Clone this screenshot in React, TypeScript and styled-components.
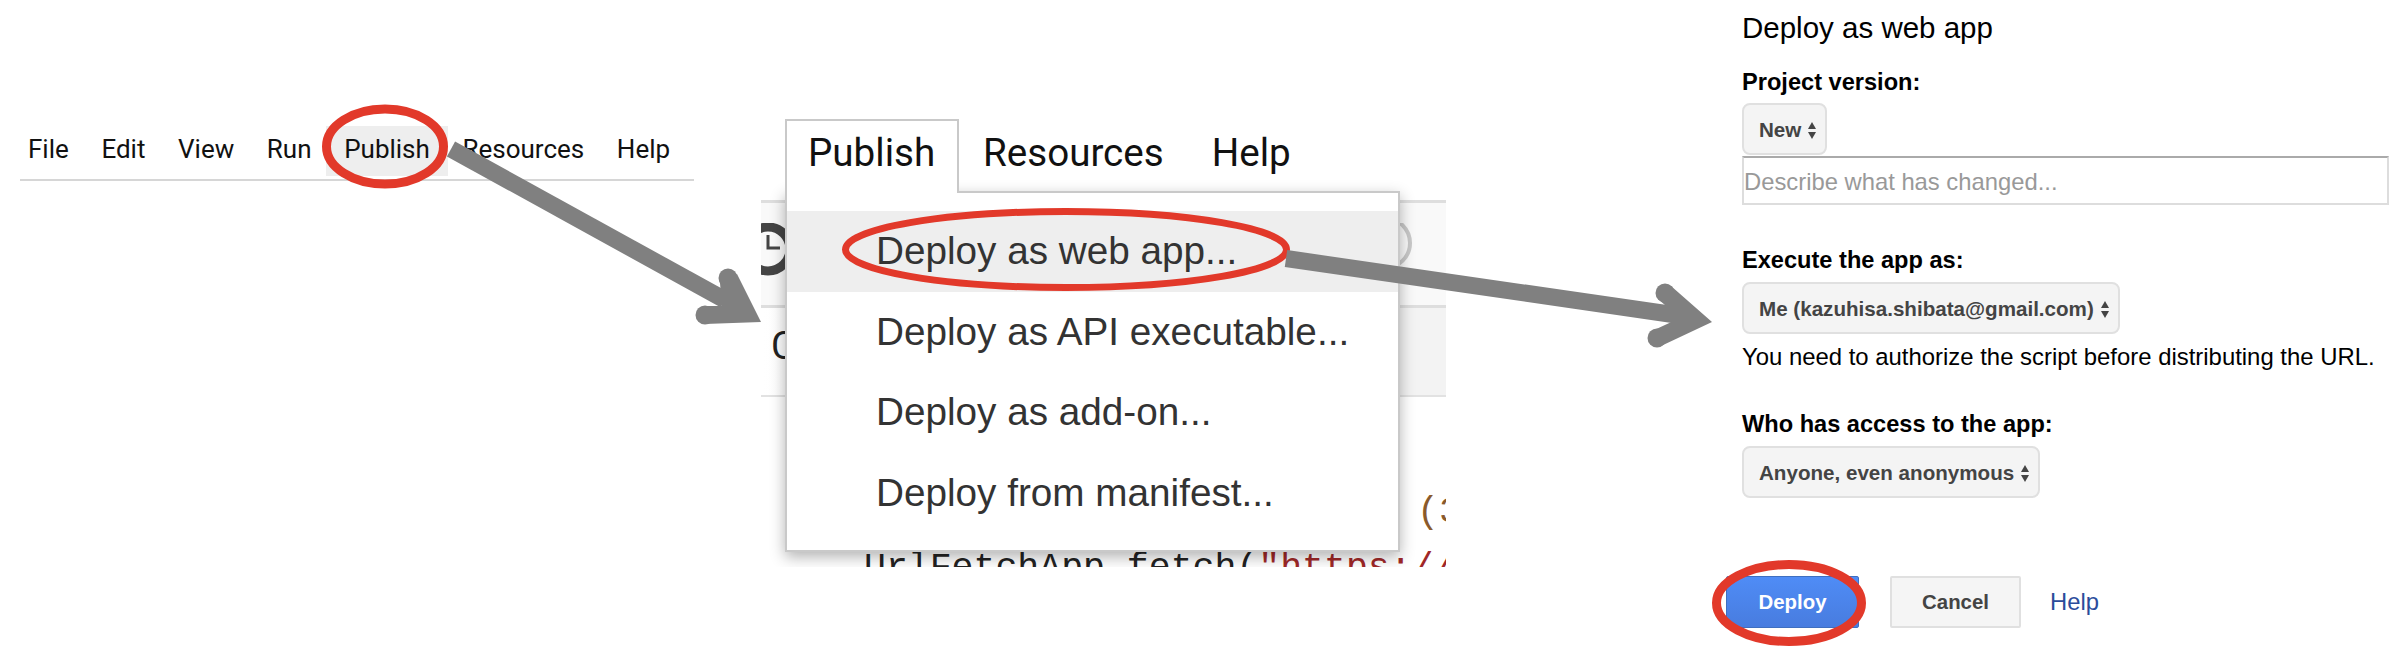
import styled, { createGlobalStyle } from "styled-components";

const GlobalStyle = createGlobalStyle`
    html, body {
        margin: 0;
        padding: 0;
        background: #fff;
    }
    * {
        box-sizing: border-box;
    }
`;

const Page = styled.div`
    position: relative;
    width: 2402px;
    height: 654px;
    display: flex;
    align-items: flex-start;
    overflow: hidden;
    background: #fff;
    font-family: "Liberation Sans", Arial, sans-serif;
`;

/* left: the plain menu bar */
const MenuBar = styled.div`
    width: 674px;
    height: 55px;
    margin: 126px 0 0 20px;
    padding-left: 8px;
    display: flex;
    gap: 32.6px;
    border-bottom: 2px solid #d6d6d6;
    font-family: Roboto, sans-serif;
    font-size: 26px;
    color: #111;
`;

const MenuItem = styled.div<{ $active?: boolean }>`
    height: 50px;
    line-height: 47px;
    ${(props) => props.$active && `
        background: #eeeeee;
        padding: 0 18px;
        margin: 0 -18px;
    `}
`;

/* middle: script editor with the open menu */
const Editor = styled.div`
    position: relative;
    width: 685px;
    height: 449px;
    margin: 118px 0 0 67px;
    padding-top: 82px;
    overflow: hidden;
`;

const Toolbar = styled.div`
    height: 108px;
    padding-top: 20px;
    display: flex;
    justify-content: space-between;
    align-items: flex-start;
    background: #f9f9f9;
    border-top: 3px solid #dedede;
    border-bottom: 3px solid #dedede;
`;

const SecondBar = styled.div`
    height: 89px;
    margin-top: 0;
    padding: 13px 0 0 10px;
    background: linear-gradient(to right, #fff, #f3f3f3 40%);
    border-bottom: 2px solid #e2e2e2;
    font-family: Roboto, sans-serif;
    font-size: 38px;
    line-height: 50px;
    color: #222;
`;

const CodeArea = styled.div`
    padding-top: 88px;
    font-family: "Liberation Mono", monospace;
    font-size: 36.5px;
    line-height: 56px;
    white-space: pre;
    color: #222;
`;

const CodeLine = styled.div<{ $indent: number }>`
    padding-left: ${(props) => props.$indent}px;
`;

const Arg = styled.span`
    color: #8a5a2b;
`;

const Str = styled.span`
    color: #a02828;
`;

const Dropdown = styled.div`
    position: absolute;
    top: 1px;
    left: 24px;
    width: 615px;
`;

const TabRow = styled.div`
    display: flex;
    align-items: flex-start;
    height: 72px;
    font-family: Roboto, sans-serif;
    font-size: 38.6px;
    color: #111;
`;

const ActiveTab = styled.div`
    position: relative;
    z-index: 1;
    width: 174px;
    height: 74px;
    padding-left: 21px;
    line-height: 64px;
    background: #fff;
    border: 2px solid #c9c9c9;
    border-bottom: none;
`;

const Tab = styled.div`
    margin-left: 24px;
    line-height: 68px;
    & + & {
        margin-left: 48px;
    }
`;

const MenuList = styled.div`
    height: 361px;
    padding: 18px 0 0;
    background: #fff;
    border: 2px solid #c9c9c9;
    box-shadow: 0 5px 14px rgba(0, 0, 0, 0.3);
`;

const MenuRow = styled.div<{ $hover?: boolean }>`
    height: 80.5px;
    padding-left: 89px;
    line-height: 80px;
    font-size: 38.7px;
    color: #333;
    background: ${(props) => (props.$hover ? "#eeeeee" : "transparent")};
`;

/* right: the deploy dialog */
const Dialog = styled.div`
    width: 676px;
    margin-left: 280px;
    padding-top: 11px;
    color: #000;
`;

const Fields = styled.div`
    padding-left: 16px;
    margin-right: 13px;
`;

const Title = styled.div`
    font-size: 29.5px;
    line-height: 34px;
`;

const Label = styled.div<{ $top: number }>`
    margin-top: ${(props) => props.$top}px;
    font-size: 23.6px;
    font-weight: bold;
    line-height: 30px;
`;

const Select = styled.div<{ $top: number }>`
    display: inline-flex;
    align-items: center;
    gap: 7px;
    height: 52px;
    margin-top: ${(props) => props.$top}px;
    padding: 2px 9px 0 15px;
    background: #f4f4f4;
    border: 2px solid #e0e0e0;
    border-radius: 8px;
    font-size: 20.6px;
    font-weight: bold;
    color: #444;
    vertical-align: top;
`;

const Stepper = styled.span`
    display: inline-flex;
    flex-direction: column;
    gap: 3px;
    &::before,
    &::after {
        content: "";
        width: 0;
        height: 0;
        border-left: 4.5px solid transparent;
        border-right: 4.5px solid transparent;
    }
    &::before {
        border-bottom: 7px solid #444;
    }
    &::after {
        border-top: 7px solid #444;
    }
`;

const DescribeInput = styled.input`
    display: block;
    width: 100%;
    height: 49px;
    margin-top: 1px;
    padding: 2px 0 0 0;
    background: #fff;
    border: 2px solid #ddd;
    border-top-color: #aaa;
    border-radius: 0;
    outline: none;
    font-family: "Liberation Sans", Arial, sans-serif;
    font-size: 23.8px;
    &::placeholder {
        color: #999;
        opacity: 1;
    }
`;

const Note = styled.div`
    margin-top: 8px;
    font-size: 23.9px;
    line-height: 30px;
    white-space: nowrap;
`;

const Actions = styled.div`
    display: flex;
    align-items: center;
    height: 52px;
    margin-top: 78px;
`;

const DeployButton = styled.div`
    width: 133px;
    height: 52px;
    line-height: 50px;
    text-align: center;
    font-size: 20.4px;
    font-weight: bold;
    color: #fff;
    background: linear-gradient(to bottom, #4f8cf6, #487cdf);
    border: 1px solid #3f6fc0;
    border-radius: 2px;
`;

const CancelButton = styled.div`
    width: 131px;
    height: 52px;
    margin-left: 31px;
    line-height: 48px;
    text-align: center;
    font-size: 20.4px;
    font-weight: bold;
    color: #444;
    background: #f5f5f5;
    border: 2px solid #e0e0e0;
    border-radius: 2px;
`;

const HelpLink = styled.span`
    margin-left: 29px;
    font-size: 23.8px;
    color: #2b4c9b;
`;

const Overlay = styled.svg`
    position: absolute;
    top: 0;
    left: 0;
    pointer-events: none;
`;

const menuNames = ["File", "Edit", "View", "Run", "Publish", "Resources", "Help"];
const deployRows = [
    "Deploy as web app...",
    "Deploy as API executable...",
    "Deploy as add-on...",
    "Deploy from manifest...",
];

const RED = "#e2392a";
const GREY = "#808080";

function App() {
    return (
        <Page>
            <GlobalStyle />
            <MenuBar>
                {menuNames.map((name) => (
                    <MenuItem key={name} $active={name === "Publish"}>{name}</MenuItem>
                ))}
            </MenuBar>

            <Editor>
                <Toolbar>
                    <svg width="40" height="60" viewBox="0 0 40 60">
                        <circle cx="7" cy="26" r="22" fill="none" stroke="#444" strokeWidth="9" />
                        <path d="M7 12V25H19" fill="none" stroke="#444" strokeWidth="3" />
                    </svg>
                    <svg width="30" height="60" viewBox="0 0 30 60" style={{ marginRight: 33 }}>
                        <circle cx="2" cy="20" r="25" fill="none" stroke="#c8c8c8" strokeWidth="4" />
                    </svg>
                </Toolbar>
                <SecondBar>C</SecondBar>
                <CodeArea>
                    <CodeLine $indent={656}><Arg>(3</Arg></CodeLine>
                    <CodeLine $indent={103}>UrlFetchApp.fetch(<Str>"https://</Str></CodeLine>
                </CodeArea>
                <Dropdown>
                    <TabRow>
                        <ActiveTab>Publish</ActiveTab>
                        <Tab>Resources</Tab>
                        <Tab>Help</Tab>
                    </TabRow>
                    <MenuList>
                        {deployRows.map((row, i) => (
                            <MenuRow key={row} $hover={i === 0}>{row}</MenuRow>
                        ))}
                    </MenuList>
                </Dropdown>
            </Editor>

            <Dialog>
                <Fields>
                    <Title>Deploy as web app</Title>
                    <Label $top={22}>Project version:</Label>
                    <Select $top={6}>New <Stepper /></Select>
                    <DescribeInput placeholder="Describe what has changed..." />
                    <Label $top={40}>Execute the app as:</Label>
                    <Select $top={7}>Me (kazuhisa.shibata@gmail.com) <Stepper /></Select>
                    <Note>You need to authorize the script before distributing the URL.</Note>
                    <Label $top={37}>Who has access to the app:</Label>
                    <Select $top={7}>Anyone, even anonymous <Stepper /></Select>
                </Fields>
                <Actions>
                    <DeployButton>Deploy</DeployButton>
                    <CancelButton>Cancel</CancelButton>
                    <HelpLink>Help</HelpLink>
                </Actions>
            </Dialog>

            <Overlay width="2402" height="654" viewBox="0 0 2402 654">
                {/* callout circles */}
                <ellipse cx="385" cy="146.5" rx="58.5" ry="37.5" fill="none" stroke={RED} strokeWidth="9" />
                <ellipse cx="1066" cy="249.5" rx="220.5" ry="38" fill="none" stroke={RED} strokeWidth="7" />
                <ellipse cx="1789" cy="603" rx="72.5" ry="38.5" fill="none" stroke={RED} strokeWidth="9" />

                {/* arrow publish -> menu */}
                <path d="M451 149L725 300" stroke={GREY} strokeWidth="17" />
                <polygon points="737,274 761,322 705,324 705,306 722,306 720,283" fill={GREY} />
                <circle cx="728" cy="278" r="9.5" fill={GREY} />
                <circle cx="705" cy="315" r="9.5" fill={GREY} />

                {/* arrow menu -> dialog */}
                <path d="M1286 258.5L1690 317" stroke={GREY} strokeWidth="17" />
                <polygon points="1671,286 1712,322 1661,346 1652,331 1680,318 1658,299" fill={GREY} />
                <circle cx="1665" cy="293" r="9.5" fill={GREY} />
                <circle cx="1657" cy="338" r="9.5" fill={GREY} />
            </Overlay>
        </Page>
    );
}

export default App;
